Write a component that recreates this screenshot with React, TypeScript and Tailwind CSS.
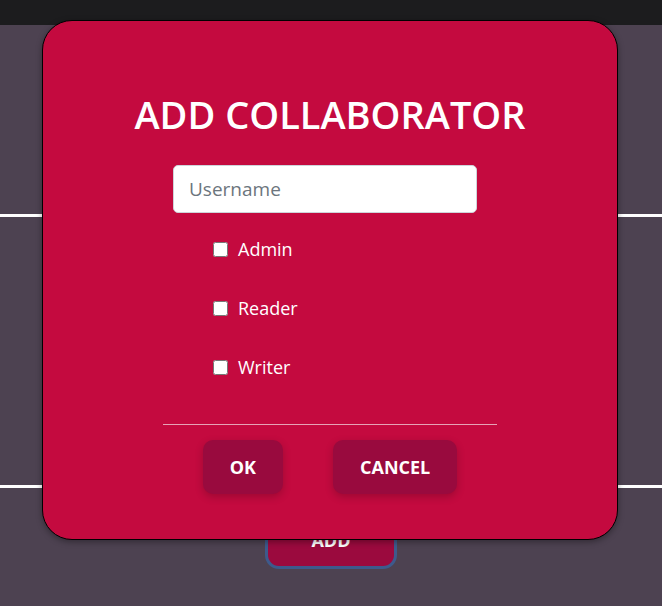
import React from 'react';

const roles = ['Admin', 'Reader', 'Writer'];

const App = () => {
  return (
    <div className="relative min-h-screen bg-[#4d4251] font-['Open_Sans',sans-serif]">
      {/* page behind the dialog */}
      <div className="h-[25px] bg-[#1c1c1e]" />
      <div className="h-[189px]" />
      <div className="h-[3px] bg-white" />
      <div className="h-[268px]" />
      <div className="h-[3px] bg-white" />
      <div className="flex justify-center pt-[23px]">
        <button className="h-[58px] w-[132px] rounded-[14px] border-[3px] border-[#3d5a8c] bg-[#9b0a3e] text-[18px] font-bold text-white">
          ADD
        </button>
      </div>

      {/* dialog */}
      <div className="absolute left-[42px] top-[20px] flex h-[520px] w-[576px] flex-col items-center rounded-[30px] border border-black bg-[#c40a3f] shadow-[0_2px_6px_rgba(0,0,0,0.35)]">
        <h1 className="mt-[71px] text-[38px] font-semibold leading-[45px] text-white">
          ADD COLLABORATOR
        </h1>
        <input
          type="text"
          placeholder="Username"
          className="mt-[28px] mr-[10px] h-[48px] w-[304px] rounded-[5px] border border-[#ced4da] bg-white px-[15px] text-[19px] text-[#495057] placeholder:text-[#6c757d] outline-none"
        />
        <div className="mt-[25px] mr-[10px] flex w-[304px] flex-col gap-[37px] pl-[40px]">
          {roles.map((r) => (
            <label key={r} className="flex h-[22px] items-center gap-[10px] text-[18px] text-white">
              <input type="checkbox" className="h-[15px] w-[15px]" />
              {r}
            </label>
          ))}
        </div>
        <div className="mt-[46px] h-px w-[334px] bg-[#e6a3b6]" />
        <div className="mt-[15px] flex gap-[50px]">
          <button className="h-[54px] rounded-[10px] bg-[#990a3e] px-[27px] text-[18px] font-bold text-white shadow-[0_3px_8px_rgba(0,0,0,0.2)]">
            OK
          </button>
          <button className="h-[54px] rounded-[10px] bg-[#990a3e] px-[27px] text-[18px] font-bold text-white shadow-[0_3px_8px_rgba(0,0,0,0.2)]">
            CANCEL
          </button>
        </div>
      </div>
    </div>
  );
};

export default App;
